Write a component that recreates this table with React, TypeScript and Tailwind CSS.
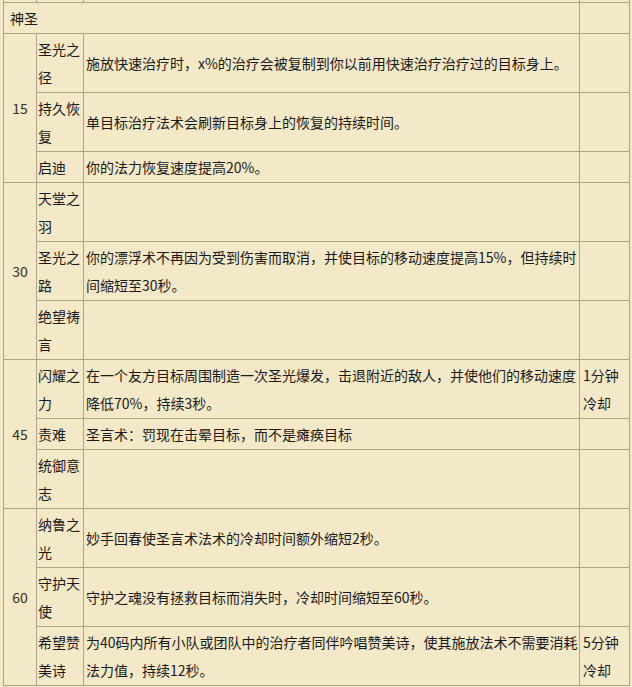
type Talent = { name: string; desc: React.ReactNode; cd?: React.ReactNode };
type Tier = { level: string; talents: Talent[] };

const tiers: Tier[] = [
  {
    level: "15",
    talents: [
      { name: "圣光之径", desc: "施放快速治疗时，x%的治疗会被复制到你以前用快速治疗治疗过的目标身上。" },
      { name: "持久恢复", desc: "单目标治疗法术会刷新目标身上的恢复的持续时间。" },
      { name: "启迪", desc: "你的法力恢复速度提高20%。" },
    ],
  },
  {
    level: "30",
    talents: [
      { name: "天堂之羽", desc: "" },
      {
        name: "圣光之路",
        desc: (
          <>
            你的漂浮术不再因为受到伤害而取消，并使目标的移动速度提高15%，但持续时
            <br />
            间缩短至30秒。
          </>
        ),
      },
      { name: "绝望祷言", desc: "" },
    ],
  },
  {
    level: "45",
    talents: [
      {
        name: "闪耀之力",
        desc: (
          <>
            在一个友方目标周围制造一次圣光爆发，击退附近的敌人，并使他们的移动速度
            <br />
            降低70%，持续3秒。
          </>
        ),
        cd: (
          <>
            1分钟
            <br />
            冷却
          </>
        ),
      },
      { name: "责难", desc: "圣言术：罚现在击晕目标，而不是瘫痪目标" },
      { name: "统御意志", desc: "" },
    ],
  },
  {
    level: "60",
    talents: [
      { name: "纳鲁之光", desc: "妙手回春使圣言术法术的冷却时间额外缩短2秒。" },
      { name: "守护天使", desc: "守护之魂没有拯救目标而消失时，冷却时间缩短至60秒。" },
      {
        name: "希望赞美诗",
        desc: (
          <>
            为40码内所有小队或团队中的治疗者同伴吟唱赞美诗，使其施放法术不需要消耗
            <br />
            法力值，持续12秒。
          </>
        ),
        cd: (
          <>
            5分钟
            <br />
            冷却
          </>
        ),
      },
    ],
  },
];

const cell = "border border-[#aea48c] px-[1px] py-[1px] align-middle";

export default function App() {
  return (
    <div
      className="min-h-[687px] h-[687px] w-full overflow-hidden bg-[#f3e8c8] text-[14px] leading-[28px] text-[#1a1a1a]"
      style={{ fontFamily: '"Noto Sans CJK SC", "Liberation Sans", sans-serif' }}
    >
      <table className="ml-[3px] mt-[-29px] w-[626px] table-fixed border-collapse">
        <colgroup>
          <col className="w-[33px]" />
          <col className="w-[47px]" />
          <col className="w-[496px]" />
          <col className="w-[50px]" />
        </colgroup>
        <tbody>
          {/* previous row, cut off above the picture */}
          <tr className="h-[31px]">
            <td className={cell}></td>
            <td className={cell}></td>
            <td className={cell}></td>
            <td className={cell}></td>
          </tr>
          <tr className="h-[31px]">
            <td colSpan={3} className={`${cell} pl-[6px]`}>
              神圣
            </td>
            <td className={cell}></td>
          </tr>
          {tiers.map((tier) =>
            tier.talents.map((t, i) => (
              <tr key={tier.level + t.name}>
                {i === 0 && (
                  <td rowSpan={tier.talents.length} className={`${cell} text-center text-[#3a3020]`}>
                    {tier.level}
                  </td>
                )}
                <td className={`${cell} break-all`}>{t.name}</td>
                <td className={`${cell} pl-[2px]`}>{t.desc}</td>
                <td className={`${cell} pl-[3px]`}>{t.cd}</td>
              </tr>
            ))
          )}
        </tbody>
      </table>
    </div>
  );
}
